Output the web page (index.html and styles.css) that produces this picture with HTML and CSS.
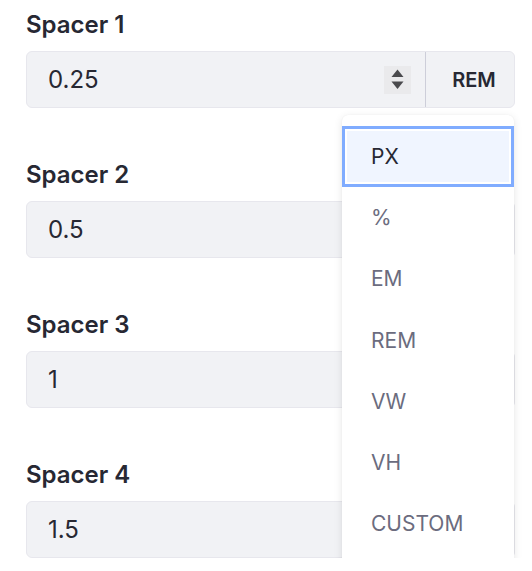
FILE: index.html
```html
<!DOCTYPE html>
<html lang="en">
<head>
<meta charset="utf-8">
<title>Spacers</title>
<link rel="stylesheet" href="styles.css">
</head>
<body>
<div class="form">
  <div class="field">
    <label class="field-label">Spacer 1</label>
    <div class="input-group">
      <div class="input">
        <span class="input-value">0.25</span>
        <span class="spin">
          <svg width="13" height="21" viewBox="0 0 13 21" aria-hidden="true">
            <path d="M6.5 0.5 L12.5 8 L0.5 8 Z" fill="#4a4a4d"/>
            <path d="M0.5 12.5 L12.5 12.5 L6.5 20 Z" fill="#4a4a4d"/>
          </svg>
        </span>
      </div>
      <button class="unit-btn">REM</button>
      <ul class="menu">
        <li class="menu-item active">PX</li>
        <li class="menu-item">%</li>
        <li class="menu-item">EM</li>
        <li class="menu-item">REM</li>
        <li class="menu-item">VW</li>
        <li class="menu-item">VH</li>
        <li class="menu-item">CUSTOM</li>
      </ul>
    </div>
  </div>
  <div class="field">
    <label class="field-label">Spacer 2</label>
    <div class="input-group">
      <div class="input"><span class="input-value">0.5</span></div>
      <button class="unit-btn">REM</button>
    </div>
  </div>
  <div class="field">
    <label class="field-label">Spacer 3</label>
    <div class="input-group">
      <div class="input"><span class="input-value">1</span></div>
      <button class="unit-btn">REM</button>
    </div>
  </div>
  <div class="field">
    <label class="field-label">Spacer 4</label>
    <div class="input-group">
      <div class="input"><span class="input-value">1.5</span></div>
      <button class="unit-btn">REM</button>
    </div>
  </div>
</div>
</body>
</html>
```

FILE: styles.css
```css
html, body {
  margin: 0;
  padding: 0;
  background: #ffffff;
}

body {
  font-family: Inter, "Liberation Sans", sans-serif;
  color: #272833;
}

.form {
  width: 489px;
  padding: 7px 0 0 26px;
  display: flex;
  flex-direction: column;
  gap: 49px;
}

.field {
  display: flex;
  flex-direction: column;
}

.field-label {
  display: block;
  font-size: 24px;
  font-weight: 600;
  line-height: 36px;
  margin-bottom: 8px;
  color: #272833;
}

.input-group {
  position: relative;
  display: flex;
  height: 57px;
  box-sizing: border-box;
  border: 1px solid #e7e7ed;
  border-radius: 6px;
  background: #f1f2f5;
}

.input {
  flex: 1;
  display: flex;
  align-items: center;
  padding: 0 22px 0 21px;
}

.input-value {
  flex: 1;
  font-size: 24px;
  color: #272833;
}

.spin {
  display: flex;
  align-items: center;
  justify-content: center;
  width: 27px;
  height: 28px;
  background: #eaeaec;
  margin-right: -8px;
}

.unit-btn {
  width: 89px;
  border: 0;
  border-left: 1px solid #cdced9;
  background: #f1f2f5;
  border-radius: 0 6px 6px 0;
  font-family: Inter, "Liberation Sans", sans-serif;
  font-size: 20px;
  font-weight: 600;
  color: #272833;
  padding: 0 0 0 8px;
}

.menu {
  position: absolute;
  top: calc(100% + 8px);
  right: 0;
  z-index: 5;
  width: 172px;
  margin: 0;
  padding: 11px 0 11px;
  list-style: none;
  background: #ffffff;
  border-radius: 6px;
  box-shadow: 0 2px 8px rgba(0, 0, 0, 0.1), 0 0 1px rgba(0, 0, 0, 0.08);
}

.menu-item {
  height: 61.2px;
  display: flex;
  align-items: center;
  padding-left: 29px;
  font-size: 21px;
  color: #6b6c7e;
}

.menu-item.active {
  color: #272833;
  background: #f0f5ff;
  box-shadow: inset 0 0 0 3px #80acff, inset 0 0 0 5px #ffffff;
}
```
